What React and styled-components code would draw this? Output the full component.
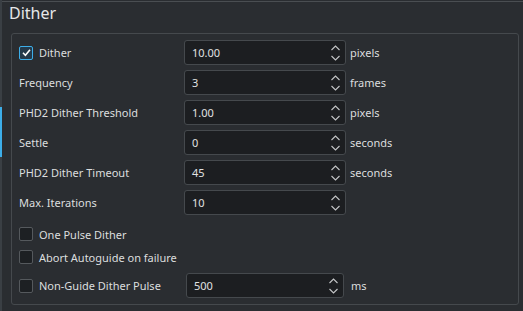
import React from "react";
import styled, { createGlobalStyle } from "styled-components";

const GlobalStyle = createGlobalStyle`
  html, body {
    margin: 0;
    padding: 0;
    background: #2a2d31;
  }
  body {
    font-family: "Noto Sans", "Open Sans", sans-serif;
    color: #dcdedf;
  }
`;

const rows = [
  { label: "Dither", value: "10.00", unit: "pixels", checkable: true, checked: true },
  { label: "Frequency", value: "3", unit: "frames" },
  { label: "PHD2 Dither Threshold", value: "1.00", unit: "pixels" },
  { label: "Settle", value: "0", unit: "seconds" },
  { label: "PHD2 Dither Timeout", value: "45", unit: "seconds" },
  { label: "Max. Iterations", value: "10" },
];

const Arrows = () => (
  <svg width="11" height="18" viewBox="0 0 11 18">
    <polyline points="1.5,6 5.5,2 9.5,6" fill="none" stroke="#c4c6c8" strokeWidth="1.1" />
    <polyline points="1.5,12 5.5,16 9.5,12" fill="none" stroke="#c4c6c8" strokeWidth="1.1" />
  </svg>
);

const Check = ({ checked }) => (
  <CheckBox checked={checked}>
    {checked && (
      <svg width="11" height="11" viewBox="0 0 11 11">
        <polyline points="2,5.8 4.4,8.2 9,2.8" fill="none" stroke="#fcfcfc" strokeWidth="1.6" />
      </svg>
    )}
  </CheckBox>
);

const SpinBox = ({ value, width }) => (
  <Spin width={width}>
    <SpinValue>{value}</SpinValue>
    <Arrows />
  </Spin>
);

const App = () => {
  return (
    <>
      <GlobalStyle />
      <Page>
        <SideStrip>
          <Indicator />
        </SideStrip>
        <Content>
          <Title>Dither</Title>
          <Group>
            {rows.map((r) => (
              <Row key={r.label}>
                <LabelCell>
                  {r.checkable && <Check checked={r.checked} />}
                  <Label>{r.label}</Label>
                </LabelCell>
                <SpinBox value={r.value} width={162} />
                {r.unit && <Unit>{r.unit}</Unit>}
              </Row>
            ))}
            <CheckRow first>
              <Check />
              <Label>One Pulse Dither</Label>
            </CheckRow>
            <CheckRow>
              <Check />
              <Label>Abort Autoguide on failure</Label>
            </CheckRow>
            <PulseRow>
              <LabelCell width={167}>
                <Check />
                <Label>Non-Guide Dither Pulse</Label>
              </LabelCell>
              <SpinBox value="500" width={158} />
              <Unit gap={7}>ms</Unit>
            </PulseRow>
          </Group>
        </Content>
      </Page>
    </>
  );
};

export default App;

const Page = styled.div`
  display: flex;
  width: 523px;
  height: 311px;
  overflow: hidden;
  background: #2a2d31;
`;

const SideStrip = styled.div`
  width: 2px;
  flex: none;
  background: #3a3f44;
  display: flex;
  flex-direction: column;
`;

const Indicator = styled.div`
  margin-top: 107px;
  height: 50px;
  background: #3daee9;
`;

const Content = styled.div`
  flex: 1;
  margin-top: 1px;
  border-top: 1px solid #4a4e52;
  display: flex;
  flex-direction: column;
`;

const Title = styled.div`
  margin-left: 7px;
  font-size: 16px;
  line-height: 22px;
  color: #e6e7e8;
`;

const Group = styled.div`
  margin: 9px 4px 0 9px;
  border: 1px solid #45494d;
  border-radius: 3px;
  padding: 6px 0 6px 7px;
  display: flex;
  flex-direction: column;
  gap: 5px;
`;

const Row = styled.div`
  display: flex;
  align-items: center;
  height: 25px;
`;

const PulseRow = styled(Row)`
  margin-top: 2px;
`;

const CheckRow = styled.div`
  display: flex;
  align-items: center;
  height: 18px;
  margin-top: ${({ first }) => (first ? "5px" : "0")};
`;

const LabelCell = styled.div`
  display: flex;
  align-items: center;
  width: ${({ width }) => width || 165}px;
  flex: none;
`;

const Label = styled.span`
  font-size: 11px;
  color: #dcdedf;
  white-space: nowrap;
`;

const CheckBox = styled.div`
  box-sizing: border-box;
  width: 14px;
  height: 14px;
  margin-right: 6px;
  border-radius: 2px;
  border: 1px solid ${({ checked }) => (checked ? "#3daee9" : "#55595d")};
  background: ${({ checked }) => (checked ? "#24394a" : "#1d2023")};
  display: flex;
  align-items: center;
  justify-content: center;
`;

const Spin = styled.div`
  box-sizing: border-box;
  width: ${({ width }) => width}px;
  height: 25px;
  flex: none;
  display: flex;
  align-items: center;
  padding: 0 4px 0 7px;
  background: #1c1e21;
  border: 1px solid #45494d;
  border-radius: 3px;
`;

const SpinValue = styled.span`
  flex: 1;
  font-size: 11px;
  color: #e0e1e2;
`;

const Unit = styled.span`
  margin-left: ${({ gap }) => gap || 4}px;
  font-size: 11px;
  color: #dcdedf;
`;
